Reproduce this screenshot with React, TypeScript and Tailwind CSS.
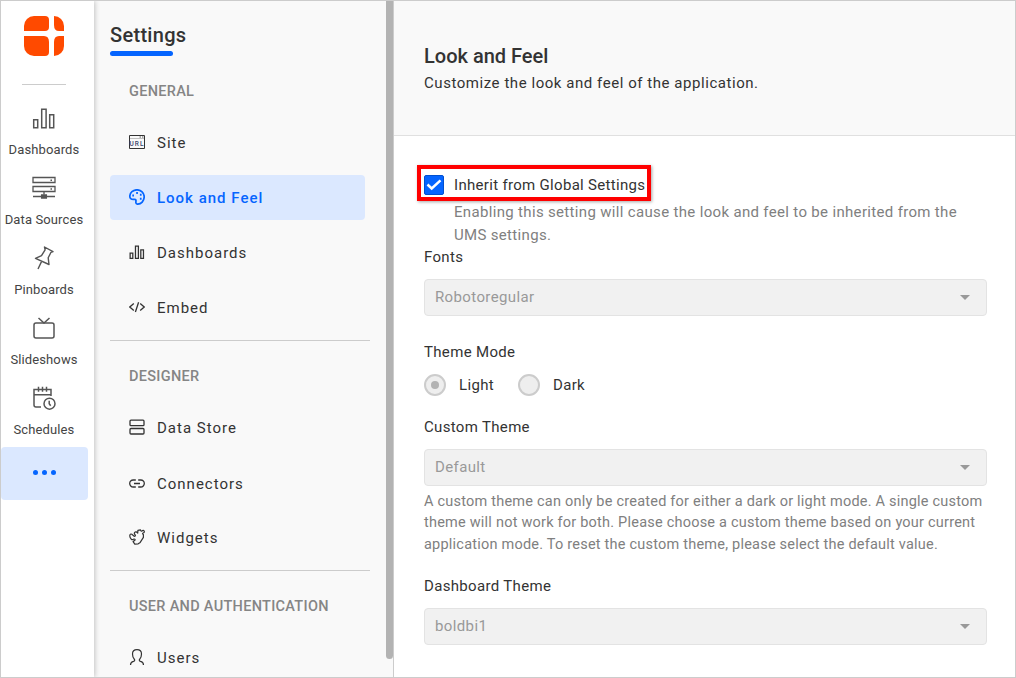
import type { ReactNode } from "react";

type NavEntry = { label: string; icon: ReactNode; active?: boolean };

const Bars = ({ className }: { className: string }) => (
  <svg viewBox="0 0 24 24" fill="none" stroke="currentColor" className={className}>
    <path d="M1.700 13.700h4v8h-4zM9.700 3.200h4.400v18.500H9.700zM17.700 8.700h4v13h-4z" />
  </svg>
);

const Logo = () => (
  <svg viewBox="0 0 40 40" fill="#ff4a00" className="h-10 w-10">
    <path d="M10 0h11a4 4 0 0 1 4 4v7q0 4-4 4H0V10A10 10 0 0 1 10 0z" />
    <path d="M30 0a10 10 0 0 1 10 10v5h-5q-5 0-5-6z" />
    <path d="M0 20h20q5 0 5 6v10a4 4 0 0 1-4 4H10A10 10 0 0 1 0 30z" />
    <path d="M35 20h5v10a10 10 0 0 1-10 10V26q0-6 5-6z" />
  </svg>
);

const rail: NavEntry[] = [
  { label: "Dashboards", icon: <Bars className="-ml-px h-6 w-6 stroke-[1.5]" /> },
  {
    label: "Data Sources",
    icon: (
      <svg viewBox="0 0 24 24" fill="none" stroke="currentColor" strokeWidth="1.300" className="-ml-px h-6 w-6">
        <path d="M1 1.500h22v5H1zM1 10.500h22v5H1zM12 15.500v3M1 20.500h22" />
        <path d="M9.600 19h4.800v3H9.600z" fill="currentColor" />
        <path d="M18.500 4.200h1.500M18.500 13H20" strokeWidth="1.500" />
      </svg>
    ),
  },
  {
    label: "Pinboards",
    icon: (
      <svg viewBox="0 0 24 24" fill="none" stroke="currentColor" strokeWidth="1.400" strokeLinejoin="round" className="-ml-px h-6 w-6">
        <path d="M12.500 1 21 5.600l-2 .7-2.800 5.500.8 6.700L3.500 12.400l6-2.700 3.600-5.900zM9.500 15.600 6 23" />
      </svg>
    ),
  },
  {
    label: "Slideshows",
    icon: (
      <svg viewBox="0 0 24 24" fill="none" stroke="currentColor" strokeWidth="1.500" className="-ml-px h-6 w-6">
        <rect x="2" y="7" width="20" height="15" rx="2" />
        <path d="m6.500 2 5.500 5 5.500-5" />
      </svg>
    ),
  },
  {
    label: "Schedules",
    icon: (
      <svg viewBox="0 0 24 24" fill="none" stroke="currentColor" strokeWidth="1.500" className="-ml-px h-6 w-6">
        <path d="M9 21H4a2 2 0 0 1-2-2V3.500h17v6.500M2 8.800h17M6.500.8v5M10.500.8v5M14.500.8v5" />
        <circle cx="17.500" cy="17.700" r="5.500" />
        <path d="M17.200 14.700v3l1.500 2" />
      </svg>
    ),
  },
];

const general: NavEntry[] = [
  {
    label: "Site",
    icon: (
      <svg viewBox="0 0 16 16" fill="none" stroke="currentColor" className="h-4 w-4">
        <path d="M.5 1.500h15v13H.5z" />
        <path d="M1 4.500h14" stroke="#999" strokeWidth=".6" />
        <path d="M10.500 3h1.500m1 0h1.500" strokeWidth=".8" />
        <text x="8" y="12" textAnchor="middle" fill="#37416a" stroke="none" className="font-[Roboto] text-[6.500px] font-medium">
          URL
        </text>
      </svg>
    ),
  },
  {
    label: "Look and Feel",
    active: true,
    icon: (
      <svg viewBox="0 0 16 16" fill="none" stroke="currentColor" strokeWidth="1.700" className="h-4 w-4">
        <path d="M8.300 15.100c-1.800-.2-1.500-2-1.300-3.100.2-1.500-.8-1.700-2.400-1.600C2 10.500.8 9.200.8 7.200.9 3.500 4 .8 8 .8s7.200 3 7.200 7-3 7.600-6.900 7.300z" />
        <path d="M3.300 6.500H5M7.200 4h1.700M10.900 5.700h1.700M10.900 9.800h1.700" strokeWidth="1.900" />
      </svg>
    ),
  },
  { label: "Dashboards", icon: <Bars className="h-4 w-4 stroke-[1.9]" /> },
  {
    label: "Embed",
    icon: (
      <svg viewBox="0 0 16 16" fill="none" stroke="currentColor" strokeWidth="1.300" className="h-4 w-4">
        <path d="M4.800 4.600.8 8l4 3.400M11.200 4.600l4 3.400-4 3.400M9.600 3.200 6.400 13" />
      </svg>
    ),
  },
];

const designer: NavEntry[] = [
  {
    label: "Data Store",
    icon: (
      <svg viewBox="0 0 16 16" fill="none" stroke="currentColor" strokeWidth="1.300" className="h-4 w-4">
        <rect x="1" y="1.200" width="14" height="5.500" rx="1" />
        <rect x="1" y="9.500" width="14" height="5.500" rx="1" />
      </svg>
    ),
  },
  {
    label: "Connectors",
    icon: (
      <svg viewBox="0 0 16 16" fill="none" stroke="currentColor" strokeWidth="1.300" className="h-4 w-4">
        <path d="M6.800 5H4.200a3.500 3.500 0 0 0 0 7h2.600M9.200 5h2.600a3.500 3.500 0 0 1 0 7H9.200M5 8.500h6" />
      </svg>
    ),
  },
  {
    label: "Widgets",
    icon: (
      <svg viewBox="0 0 16 16" fill="none" stroke="currentColor" strokeWidth="1.200" strokeLinejoin="round" className="h-4 w-4">
        <path d="M2.800 5.200l2.400 2c.9.300 1.500-.5 1-1.200-.9-.9-1.200-1.800-.5-2.600.8-.8 1.900-.6 2.600.3l.4.400.2-2.700 2.600-.5c.2 1 .8 1.500 1.600 1 .7-.8 1.900-.6 2.200.4.200 1-.5 1.700-1.400 1.900-.6.400-.4 1 .5 1.400v2.800l-3.200 5-2 1.400-3.400.3-1.700-2.400c.2-1 1.600-.7 2-1.600.2-.9-.6-1.300-1.400-1-.8.700-1.800.8-2.500 0C1 8.800.6 7 1 5.800c.4-.8 1.100-1 1.800-.6z" />
      </svg>
    ),
  },
];

const users: NavEntry[] = [
  {
    label: "Users",
    icon: (
      <svg viewBox="0 0 16 16" fill="none" stroke="currentColor" strokeWidth="1.200" className="h-4 w-4">
        <path d="M1.500 16c0-2 .9-3.300 3-3.700 1.400-.3 1.500-1.400.7-2.300C4.100 8.700 3.500 7 3.500 5 3.500 2.200 5.300.7 8 .7s4.500 1.500 4.500 4.300c0 2-.6 3.700-1.700 5-.8.900-.7 2 .7 2.300 2.100.4 3 1.700 3 3.700" />
      </svg>
    ),
  },
];

function NavSection({ title, entries }: { title: string; entries: NavEntry[] }) {
  return (
    <section className="shrink-0">
      <h2 className="mb-[18px] ml-[19px] h-5 text-[14.5px] leading-5 font-medium tracking-[0.3px] text-[#858585]">{title}</h2>
      <ul className="flex flex-col gap-2.5">
        {entries.map((e) => (
          <li
            key={e.label}
            className={`flex h-[45px] w-[255px] items-start gap-3 rounded-[4px] pl-[19px] text-[15px] leading-5 ${
              e.active
                ? "bg-[#dbe8ff] font-medium tracking-[1px] text-[#0565ff]"
                : "tracking-[1px] text-[#333]"
            } ${e.label === "Connectors" ? "pt-[15px]" : "pt-[14px]"}`}
          >
            {e.icon}
            <span className="-mt-px">{e.label}</span>
          </li>
        ))}
      </ul>
    </section>
  );
}

function SelectBox({ value }: { value: string }) {
  return (
    <div className="flex h-[37px] w-[563px] items-start justify-between rounded-[4px] border border-[#e3e3e3] bg-[#f1f1f1] pt-[7px] pr-4 pl-2.5 text-[15px] tracking-[0.38px] text-[#999]">
      <span>{value}</span>
      <svg viewBox="0 0 10 5" className="mt-2 h-[5px] w-2.5" fill="#999">
        <path d="M0 0h10L5 5z" />
      </svg>
    </div>
  );
}

function Radio({ label, checked }: { label: string; checked?: boolean }) {
  return (
    <div className="flex items-center gap-[13px]">
      <span className="flex h-[22px] w-[22px] items-center justify-center rounded-full border-2 border-[#ccc] bg-[#eee]">
        {checked && <span className="h-2 w-2 rounded-full bg-[#b3b3b3]" />}
      </span>
      <span>{label}</span>
    </div>
  );
}

export default function App() {
  return (
    <div className="flex h-[678px] w-[1016px] overflow-hidden border border-[#ccc] bg-white font-[Roboto,sans-serif] text-[#333]">
      <nav className="z-10 flex w-[93px] shrink-0 flex-col bg-white text-[#555] shadow-[1px_0_5px_rgba(0,0,0,0.22)]">
        <div className="mt-[15px] ml-[23px]">
          <Logo />
        </div>
        <div className="mt-7 ml-[21px] h-px w-11 bg-[#ccc]" />
        <ul className="mt-[21px] flex w-[87px] flex-col">
          {rail.map((e) => (
            <li key={e.label} className="flex h-[70px] flex-col items-center">
              {e.icon}
              <span className="mt-2.5 -ml-px text-[13px] leading-5 tracking-[0.12px] whitespace-nowrap text-[#444]">{e.label}</span>
            </li>
          ))}
        </ul>
        <div className="-mt-[9px] flex h-[53px] w-[87px] items-center justify-center gap-1 rounded-[4px] bg-[#dbe8ff] pb-0.5">
          <span className="h-[5px] w-[5px] rounded-full bg-[#0565ff]" />
          <span className="h-[5px] w-[5px] rounded-full bg-[#0565ff]" />
          <span className="h-[5px] w-[5px] rounded-full bg-[#0565ff]" />
        </div>
      </nav>

      <aside className="flex w-[300px] shrink-0 overflow-hidden border-r border-[#ccc] bg-[#f9f9f9]">
        <div className="flex w-[292px] shrink-0 flex-col pl-4">
          <h1 className="mt-5 h-7 text-[20px] leading-7 font-medium tracking-[0.3px]">Settings</h1>
          <div className="mt-0.5 mb-[26px] h-[5px] w-[63px] shrink-0 rounded-full bg-[#0565ff]" />
          <NavSection title="GENERAL" entries={general} />
          <div className="mt-2.5 mb-[26px] h-px w-[260px] shrink-0 bg-[#ccc]" />
          <NavSection title="DESIGNER" entries={designer} />
          <div className="mt-2.5 mb-[26px] h-px w-[260px] shrink-0 bg-[#ccc]" />
          <NavSection title="USER AND AUTHENTICATION" entries={users} />
        </div>
        <div className="h-[658px] w-[7px] shrink-0 rounded-b-full bg-[#b3b3b3]" />
      </aside>

      <main className="flex flex-1 flex-col">
        <header className="h-[135px] border-b border-[#e0e0e0] bg-[#f9f9f9] pl-[30px]">
          <h2 className="pt-[41px] text-[20px] leading-7 font-medium">Look and Feel</h2>
          <p className="mt-[3px] text-[15px] leading-5 tracking-[0.55px]">Customize the look and feel of the application.</p>
        </header>
        <div className="flex flex-col pl-[30px] text-[15px] leading-5 tracking-[0.33px]">
          <div className="mt-[29px] -ml-[7px] flex h-9 w-[234px] items-center gap-2.5 border-4 border-[#ff0000] pt-1 pl-[3px] whitespace-nowrap shadow-[1px_1px_3px_rgba(0,0,0,0.35)]">
            <span className="flex h-5 w-5 shrink-0 items-center justify-center rounded-[2px] border border-[#0050d0] bg-[#0565ff]">
              <svg viewBox="0 0 16 16" fill="none" stroke="#fff" strokeWidth="2.500" className="h-4 w-4 shrink-0">
                <path d="m1.500 7.500 4.200 4L14.500 3.300" />
              </svg>
            </span>
            <span className="tracking-[0.31px]">Inherit from Global Settings</span>
          </div>
          <p className="ml-[30px] w-[520px] leading-[23px] text-[#808080]">
            Enabling this setting will cause the look and feel to be inherited from the
            <br />
            UMS settings.
          </p>
          <span className="mb-3">Fonts</span>
          <SelectBox value="Robotoregular" />
          <span className="mt-[26px]">Theme Mode</span>
          <div className="mt-3 flex gap-6">
            <Radio label="Light" checked />
            <Radio label="Dark" />
          </div>
          <span className="mt-[21px] mb-3">Custom Theme</span>
          <SelectBox value="Default" />
          <p className="mt-[5px] text-[14.5px] leading-[21.4px] tracking-[0.22px] whitespace-nowrap text-[#808080]">
            A custom theme can only be created for either a dark or light mode. A single custom
            <br />
            theme will not work for both. Please choose a custom theme based on your current
            <br />
            application mode. To reset the custom theme, please select the default value.
          </p>
          <span className="mt-[20.3px] mb-3">Dashboard Theme</span>
          <SelectBox value="boldbi1" />
        </div>
      </main>
    </div>
  );
}
